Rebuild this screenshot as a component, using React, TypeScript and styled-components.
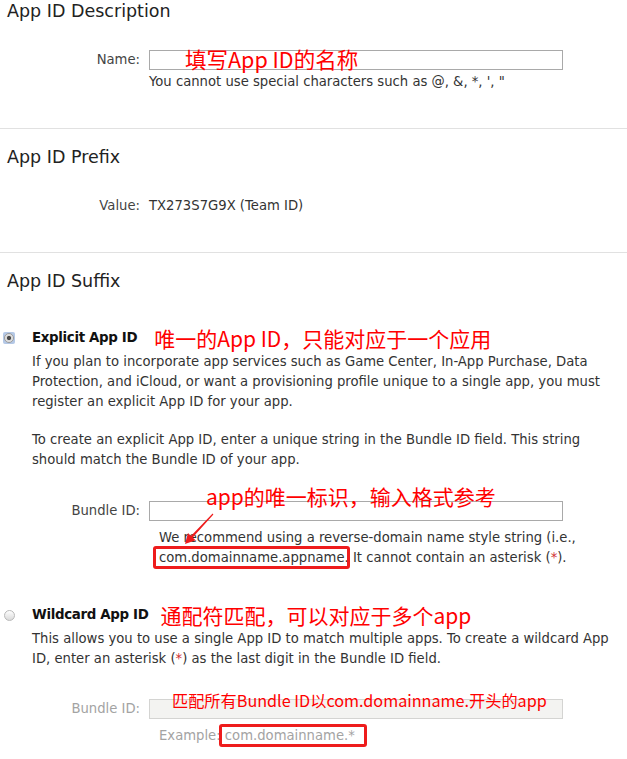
import React from "react";
import styled, { createGlobalStyle } from "styled-components";

const GlobalStyle = createGlobalStyle`
  html, body { margin: 0; padding: 0; background: #ffffff; }
  body { font-family: "DejaVu Sans", Verdana, sans-serif; }
`;

const Page = styled.div`
  position: relative;
  width: 627px;
  color: #333;
  font-size: 13.2px;
  line-height: 20px;
`;

const Section = styled.section<{ $first?: boolean }>`
  border-top: ${(p) => (p.$first ? "none" : "1px solid #e1e1e1")};
  padding: ${(p) => (p.$first ? "0" : "17px")} 0 36px;
`;

const Heading = styled.h2`
  margin: 0;
  padding-left: 7px;
  font-size: 17.5px;
  font-weight: normal;
  line-height: 22px;
  color: #222;
`;

const Body = styled.div<{ $top: number }>`
  margin-top: ${(p) => p.$top}px;
`;

const Field = styled.div<{ $top?: number; $helpGap?: number }>`
  display: grid;
  grid-template-columns: 140px 414px;
  column-gap: 9px;
  row-gap: ${(p) => p.$helpGap ?? 0}px;
  align-items: center;
  margin-top: ${(p) => p.$top ?? 0}px;
`;

const Label = styled.div<{ $disabled?: boolean }>`
  text-align: right;
  color: ${(p) => (p.$disabled ? "#a3a3a3" : "#444")};
  line-height: 20px;
`;

const InputWrap = styled.div`
  position: relative;
  width: 414px;
  height: 20px;
`;

const TextInput = styled.input<{ $disabled?: boolean }>`
  display: block;
  box-sizing: border-box;
  width: 100%;
  height: 20px;
  margin: 0;
  padding: 0 4px;
  border: 1px solid ${(p) => (p.$disabled ? "#d4d4d2" : "#a9a9a9")};
  border-radius: 0;
  background: ${(p) => (p.$disabled ? "#f3f3f1" : "#ffffff")};
  outline: none;
`;

const Value = styled.div`
  color: #333;
`;

const Help = styled.div<{ $indent?: number; $muted?: boolean }>`
  grid-column: 2 / span 1;
  padding-left: ${(p) => p.$indent ?? 0}px;
  white-space: nowrap;
  color: ${(p) => (p.$muted ? "#a3a3a3" : "#333")};
`;

const Note = styled.span<{ $x: number; $y: number; $size: number }>`
  position: absolute;
  left: ${(p) => p.$x}px;
  top: ${(p) => p.$y}px;
  font-family: "Noto Sans CJK SC", "DejaVu Sans", sans-serif;
  font-size: ${(p) => p.$size}px;
  line-height: 1;
  color: #ff0000;
  white-space: nowrap;
  pointer-events: none;
`;

const InlineNote = styled.span<{ $gap: number }>`
  margin-left: ${(p) => p.$gap}px;
  font-family: "Noto Sans CJK SC", "DejaVu Sans", sans-serif;
  font-size: 21px;
  line-height: 1;
  color: #ff0000;
  white-space: nowrap;
`;

const Boxed = styled.span<{ $right?: number }>`
  position: relative;
  &::after {
    content: "";
    position: absolute;
    left: -6px;
    right: ${(p) => -(p.$right ?? 5)}px;
    top: -4px;
    bottom: -4px;
    border: 3px solid #ee1c1c;
    border-radius: 3px;
    pointer-events: none;
  }
`;

const Star = styled.span`
  color: #d03030;
`;

const Option = styled.div<{ $top: number }>`
  margin-top: ${(p) => p.$top}px;
`;

const OptionHead = styled.div`
  display: flex;
  align-items: center;
  height: 20px;
`;

const RadioSlot = styled.div`
  width: 32px;
  display: flex;
  align-items: center;
`;

const RadioOn = styled.span`
  display: flex;
  align-items: center;
  justify-content: center;
  box-sizing: border-box;
  width: 12px;
  height: 12px;
  margin-left: 3px;
  border-radius: 2px;
  background: #b4c8e6;
  &::before {
    content: "";
    box-sizing: border-box;
    width: 10px;
    height: 10px;
    border-radius: 50%;
    border: 1px solid #9a9a9a;
    background: radial-gradient(circle, #4a4a4a 0 1.8px, #d6d6d6 2.4px, #f4f4f4 100%);
  }
`;

const RadioOff = styled.span`
  display: block;
  box-sizing: border-box;
  width: 11px;
  height: 11px;
  margin-left: 4px;
  border-radius: 50%;
  border: 1px solid #b9b9b9;
  background: linear-gradient(#fefefe, #dadada);
`;

const OptionTitle = styled.span`
  font-weight: bold;
  font-size: 13.4px;
  letter-spacing: -0.35px;
  color: #111;
  line-height: 20px;
`;

const OptionText = styled.p<{ $top: number }>`
  margin: ${(p) => p.$top}px 0 0 32px;
  white-space: nowrap;
  color: #333;
`;

const Arrow = styled.svg`
  position: absolute;
  left: 180px;
  top: 508px;
  width: 40px;
  height: 42px;
  pointer-events: none;
`;

export default function App() {
  return (
    <Page>
      <GlobalStyle />
      <Section $first>
        <Heading>App ID Description</Heading>
        <Body $top={28}>
          <Field $helpGap={2}>
            <Label>Name:</Label>
            <InputWrap>
              <TextInput readOnly />
              <Note $x={36} $y={-2} $size={21.5}>填写App ID的名称</Note>
            </InputWrap>
            <Help>You cannot use special characters such as @, &amp;, *, ', "</Help>
          </Field>
        </Body>
      </Section>

      <Section>
        <Heading>App ID Prefix</Heading>
        <Body $top={28}>
          <Field>
            <Label>Value:</Label>
            <Value>TX273S7G9X (Team ID)</Value>
          </Field>
        </Body>
      </Section>

      <Section>
        <Heading>App ID Suffix</Heading>
        <Option $top={36}>
          <OptionHead>
            <RadioSlot>
              <RadioOn />
            </RadioSlot>
            <OptionTitle>Explicit App ID</OptionTitle>
            <InlineNote $gap={17}>唯一的App ID，只能对应于一个应用</InlineNote>
          </OptionHead>
          <OptionText $top={4}>
            If you plan to incorporate app services such as Game Center, In-App Purchase, Data
            <br />
            Protection, and iCloud, or want a provisioning profile unique to a single app, you must
            <br />
            register an explicit App ID for your app.
          </OptionText>
          <OptionText $top={18}>
            To create an explicit App ID, enter a unique string in the Bundle ID field. This string
            <br />
            should match the Bundle ID of your app.
          </OptionText>
          <Field $top={31} $helpGap={7}>
            <Label>Bundle ID:</Label>
            <InputWrap>
              <TextInput readOnly />
              <Note $x={57} $y={-15} $size={21}>app的唯一标识，输入格式参考</Note>
            </InputWrap>
            <Help $indent={10}>
              We recommend using a reverse-domain name style string (i.e.,
              <br />
              <Boxed>com.domainname.appname</Boxed>. It cannot contain an asterisk (<Star>*</Star>).
            </Help>
          </Field>
        </Option>

        <Option $top={37}>
          <OptionHead>
            <RadioSlot>
              <RadioOff />
            </RadioSlot>
            <OptionTitle>Wildcard App ID</OptionTitle>
            <InlineNote $gap={12}>通配符匹配，可以对应于多个app</InlineNote>
          </OptionHead>
          <OptionText $top={4}>
            This allows you to use a single App ID to match multiple apps. To create a wildcard App
            <br />
            ID, enter an asterisk (<Star>*</Star>) as the last digit in the Bundle ID field.
          </OptionText>
          <Field $top={30} $helpGap={7}>
            <Label $disabled>Bundle ID:</Label>
            <InputWrap>
              <TextInput readOnly $disabled disabled />
              <Note $x={23} $y={-7} $size={16.2}>匹配所有Bundle ID以com.domainname.开头的app</Note>
            </InputWrap>
            <Help $indent={10} $muted>
              Example: <Boxed $right={12}>com.domainname.*</Boxed>
            </Help>
          </Field>
        </Option>
      </Section>

      <Arrow viewBox="180 508 40 42" aria-hidden="true">
        <polygon
          points="213.4,514.4 192.7,537.5 195.6,540.3 185,544 188,533.1 190.9,535.9 212.6,513.6"
          fill="#ee1c1c"
        />
      </Arrow>
    </Page>
  );
}
